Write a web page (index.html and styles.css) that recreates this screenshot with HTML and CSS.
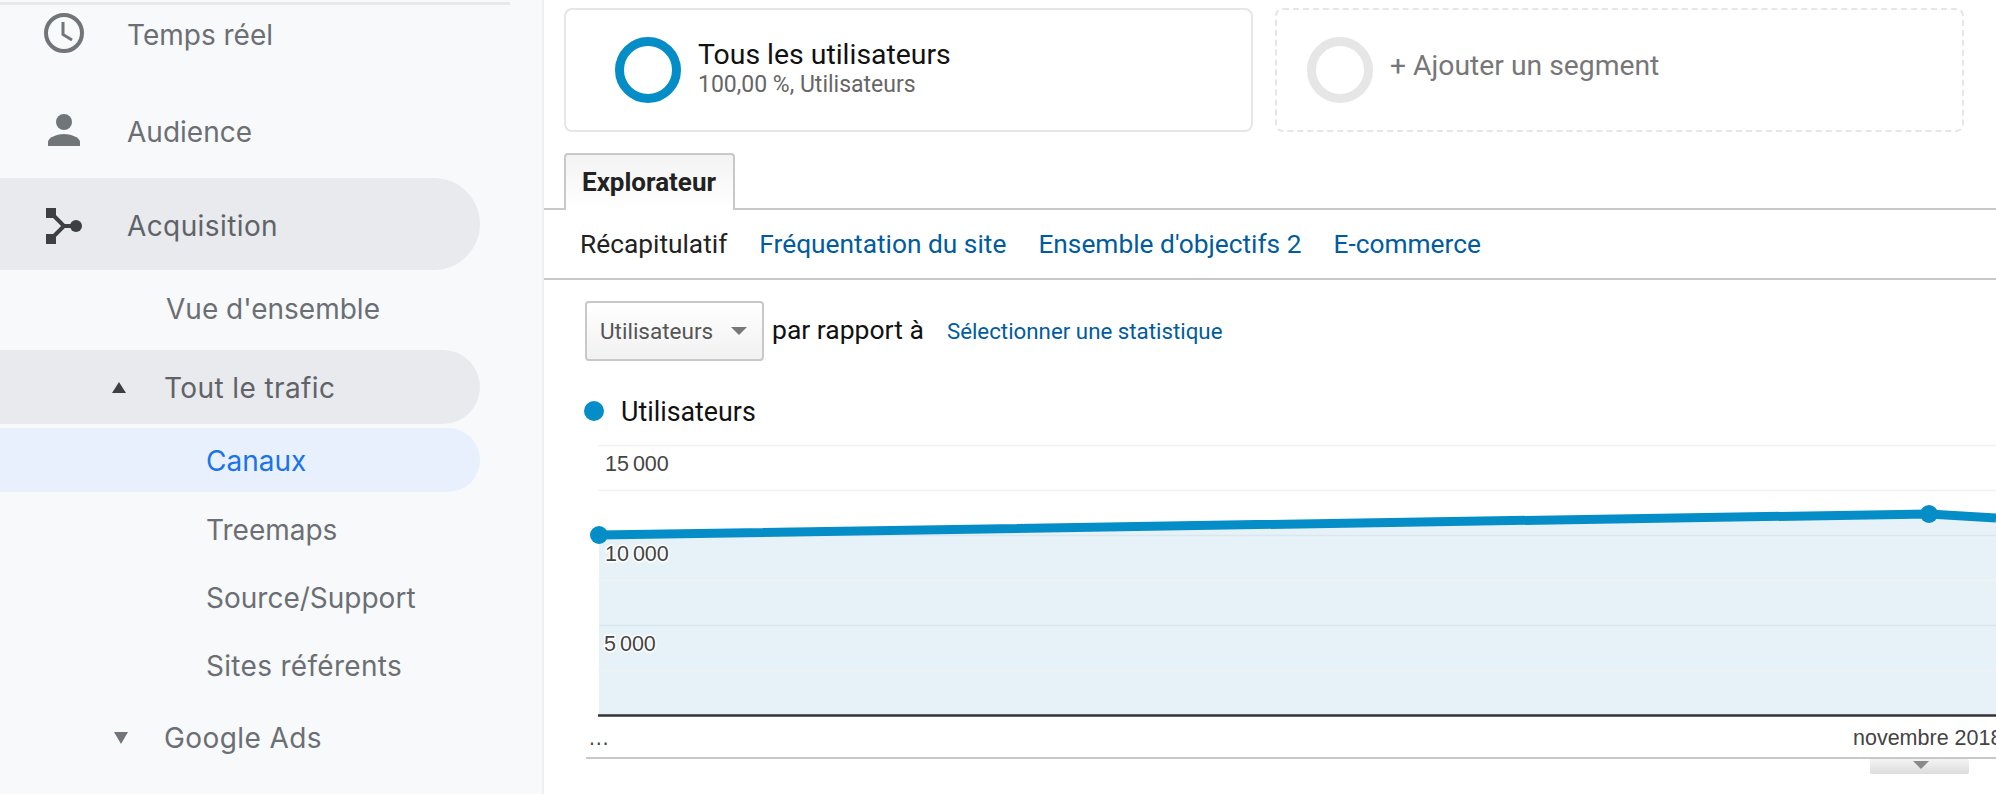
FILE: index.html
```html
<!DOCTYPE html>
<html lang="fr">
<head>
<meta charset="utf-8">
<title>Canaux</title>
<link rel="stylesheet" href="styles.css">
</head>
<body>
<div class="app">
  <aside class="sidebar">
    <div class="rule"></div>
    <nav class="nav">
      <a class="top first"><svg class="ico" width="40" height="40" viewBox="0 0 40 40"><circle cx="20" cy="20" r="18" fill="none" stroke="#70757a" stroke-width="4"/><path d="M19 9v12.500l9 5.500" fill="none" stroke="#70757a" stroke-width="3"/></svg><span>Temps réel</span></a>
      <a class="top"><svg class="ico" width="40" height="40" viewBox="0 0 40 40"><circle cx="20" cy="12" r="8" fill="#70757a"/><path d="M4 36v-4c0-5 10-8 16-8s16 3 16 8v4z" fill="#70757a"/></svg><span>Audience</span></a>
      <a class="top active"><svg class="ico" width="40" height="40" viewBox="0 0 40 40"><rect x="2" y="4" width="10" height="10" fill="#3c4043"/><rect x="2" y="30" width="10" height="10" fill="#3c4043"/><circle cx="32" cy="22" r="6" fill="#3c4043"/><path d="M8 10l12 12-12 12M20 22h10" fill="none" stroke="#3c4043" stroke-width="4"/></svg><span>Acquisition</span></a>
      <a class="sub overview">Vue d'ensemble</a>
      <a class="sub group open"><i class="tri up"></i><span>Tout le trafic</span></a>
      <a class="leaf current">Canaux</a>
      <a class="leaf spaced">Treemaps</a>
      <a class="leaf">Source/Support</a>
      <a class="leaf sites">Sites référents</a>
      <a class="sub group ads"><i class="tri down"></i><span>Google Ads</span></a>
    </nav>
  </aside>
  <main class="main">
    <section class="segments">
      <div class="segment">
        <div class="ring blue"></div>
        <div class="seg-text">
          <div class="seg-title">Tous les utilisateurs</div>
          <div class="seg-sub">100,00 %, Utilisateurs</div>
        </div>
      </div>
      <div class="segment add">
        <div class="ring grey"></div>
        <div class="seg-add">+ Ajouter un segment</div>
      </div>
    </section>
    <div class="tabs"><div class="tab">Explorateur</div></div>
    <div class="subtabs">
      <span class="plain">Récapitulatif</span>
      <a class="link">Fréquentation du site</a>
      <a class="link">Ensemble d'objectifs 2</a>
      <a class="link">E-commerce</a>
    </div>
    <div class="metric">
      <div class="select"><span>Utilisateurs</span><i class="caret"></i></div>
      <span class="versus">par rapport à</span>
      <a class="pick">Sélectionner une statistique</a>
    </div>
    <div class="legend"><i class="dot"></i><span>Utilisateurs</span></div>
    <svg class="chart" width="1452" height="354" viewBox="0 0 1452 354">
      <defs>
        <linearGradient id="handle" x1="0" y1="0" x2="0" y2="1"><stop offset="0" stop-color="#f4f4f4"/><stop offset="1" stop-color="#dcdcdc"/></linearGradient>
      </defs>
      <path class="area" d="M55 95L1385 74L1452 78V275H55z"/>
      <path class="grid" d="M54 5.500H1452M54 50.500H1452M54 140.500H1452M54 231.500H1452"/>
      <path class="grid-strong" d="M55 95.500H1452M55 185.500H1452"/>
      <path class="axis" d="M54 275.500H1452"/>
      <path class="base" d="M42 318H1452"/>
      <path class="line" d="M55 95L1385 74L1452 78"/>
      <circle class="pt" cx="55" cy="95" r="9"/>
      <circle class="pt" cx="1385" cy="74" r="9"/>
      <text class="yl" x="61" y="31">15 000</text>
      <text class="yl" x="61" y="121">10 000</text>
      <text class="yl" x="60" y="211">5 000</text>
      <text class="xl" x="44" y="305">…</text>
      <text class="xl" x="1309" y="305">novembre 2018</text>
      <rect x="1326" y="319" width="99" height="15" rx="2" fill="url(#handle)"/>
      <path d="M1369 321h16l-8 8z" fill="#8a8a8a"/>
    </svg>
  </main>
</div>
</body>
</html>
```

FILE: styles.css
```css
* { box-sizing: border-box; }
html, body { margin: 0; height: 794px; overflow: hidden; background: #fff; }
.app { display: flex; width: 1996px; height: 794px; overflow: hidden; }

.sidebar { width: 544px; flex: none; background: #f8f9fb; border-right: 2px solid #eff0f3; font-family: Inter, "Noto Sans", sans-serif; font-size: 28px; color: #6b6f74; }
.rule { width: 510px; height: 3px; margin-top: 2px; background: #e6e8eb; }
.nav { display: flex; flex-direction: column; }
.nav a { display: flex; align-items: center; }
.top { height: 92px; margin-top: 2px; padding-left: 44px; gap: 43px; }
.top span { margin-top: 3px; }
.top.first { height: 56px; margin-top: 0; margin-bottom: 21px; }
.top .ico { flex: none; }
.active, .open { background: #e8eaed; border-radius: 0 46px 46px 0; width: 480px; color: #5f6368; letter-spacing: 0.400px; }
.overview { height: 76px; padding: 2px 0 0 166px; }
.group { gap: 38px; padding-left: 112px; height: 74px; }
.open { margin-top: 4px; }
.open span { margin-top: 2px; }
.leaf { height: 68px; padding: 2px 0 0 206px; }
.sites { letter-spacing: 0.300px; }
.current { height: 64px; margin-top: 4px; margin-bottom: 3px; width: 480px; background: #e8f0fe; color: #1a73e8; border-radius: 0 32px 32px 0; }
.ads { margin-top: 4px; height: 68px; padding: 2px 0 0 114px; gap: 36px; letter-spacing: 0.400px; }
.tri { width: 0; height: 0; flex: none; border-left: 7.500px solid transparent; border-right: 7.500px solid transparent; }
.tri.up { border-bottom: 11px solid #3c4043; }
.tri.down { border-top: 12px solid #70757a; }

.main { flex: 1; min-width: 0; font-family: Roboto, sans-serif; color: #111; }
.segments { display: flex; gap: 22px; padding: 8px 0 0 20px; }
.segment { display: flex; align-items: center; width: 689px; height: 124px; padding-left: 49px; gap: 17px; border: 2px solid #e6e6e6; border-radius: 8px; }
.segment.add { border-style: dashed; padding-left: 30px; }
.ring { width: 66px; height: 66px; flex: none; border-radius: 50%; border: 9px solid; }
.ring.blue { border-color: #058dc7; }
.ring.grey { border-color: #e6e6e6; }
.seg-text { margin-top: -2px; }
.seg-title { font-size: 28.400px; line-height: 32px; }
.seg-sub { font-size: 23px; line-height: 28px; color: #666; }
.seg-add { font-size: 28.300px; color: #777; margin-top: -10px; }

.tabs { display: flex; margin-top: 21px; padding-left: 20px; border-bottom: 2px solid #c8c8c8; height: 57px; }
.tab { width: 171px; height: 57px; padding-left: 16px; border: 2px solid #c8c8c8; border-bottom: 0; border-radius: 4px 4px 0 0; background: linear-gradient(#f3f3f3, #fff); font-size: 26px; font-weight: 700; line-height: 54px; color: #222; }
.subtabs { display: flex; align-items: center; gap: 32px; height: 70px; padding-left: 36px; border-bottom: 2px solid #c8c8c8; font-size: 26.300px; }
.plain { color: #222; }
.link { color: #005c9e; }
.metric { display: flex; align-items: center; margin-top: 21px; padding-left: 41px; }
.select { display: flex; align-items: center; justify-content: space-between; width: 179px; height: 60px; padding: 0 15px 0 13px; border: 2px solid #c8c8c8; border-radius: 4px; background: linear-gradient(#fff, #f1f1f1); font-size: 22.500px; color: #555; }
.caret { width: 0; height: 0; border-left: 8px solid transparent; border-right: 8px solid transparent; border-top: 8px solid #777; }
.versus { margin-left: 8px; font-size: 26.500px; margin-top: -4px; }
.pick { margin-left: 23px; font-size: 22.300px; color: #005c9e; }
.legend { display: flex; align-items: center; gap: 17px; height: 30px; margin-top: 35px; padding-left: 40px; font-size: 26.800px; }
.legend span { margin-top: 2px; }
.dot { width: 20px; height: 20px; border-radius: 50%; background: #058dc7; }
.chart { display: block; margin-top: 14px; overflow: hidden; }
.area { fill: #e6f2f8; }
.grid { fill: none; stroke: #f1f2f3; stroke-width: 1.500px; }
.grid-strong { fill: none; stroke: #dbe6ed; stroke-width: 1.500px; }
.axis { fill: none; stroke: #333; stroke-width: 2.500px; }
.base { fill: none; stroke: #c8c8c8; stroke-width: 2px; }
.line { fill: none; stroke: #058dc7; stroke-width: 9px; }
.pt { fill: #058dc7; }
.yl { font-family: "Liberation Sans", sans-serif; font-size: 21.500px; word-spacing: -2px; fill: #444; paint-order: stroke; stroke: #fff; stroke-width: 3px; }
.xl { font-family: "Liberation Sans", sans-serif; font-size: 21.500px; fill: #444; }
```
